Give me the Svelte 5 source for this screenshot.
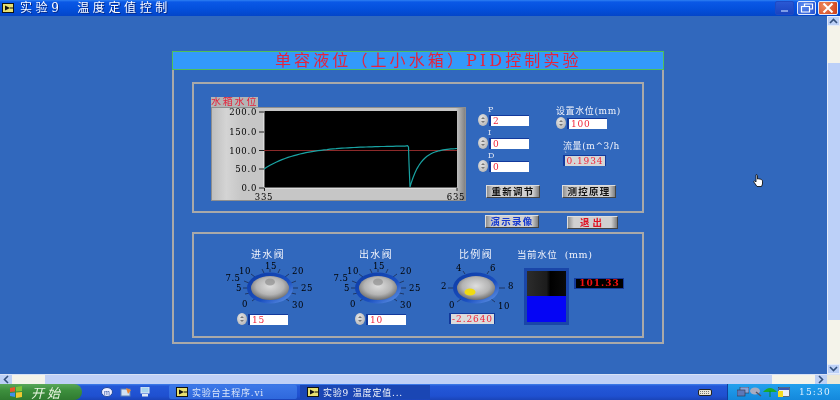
<script>
  const f = (v) => v.toFixed(1);
  let pts = [];
  for (let x = 53; x <= 196; x += 3) pts.push(`${x},${f(38.7 + 23.3 * Math.exp(-(x - 53) / 35))}`);
  pts.push('196.5,38.7', '197.5,40', '198,56', '199,80');
  for (let x = 200; x <= 246; x += 2) pts.push(`${x},${f(41 + 39 * Math.exp(-(x - 199) / 11))}`);
  const curve = pts.join(' ');
  const yAxis = [['200.0', 5], ['150.0', 25], ['100.0', 43.5], ['50.0', 62], ['0.0', 81]];

  const valveLabels = [['0', -25, 16], ['5', -31, 0], ['7.5', -37, -10], ['10', -25, -17], ['15', 1, -22], ['20', 28, -17], ['25', 37, 0], ['30', 28, 17]];
  const valveTicks = [[-14, 10, -18, 13], [-20, 5, -25, 6], [-21, 0, -27, 0], [-21, -5, -26, -7], [-15, -11, -19, -14], [-6, -15, -8, -19], [0, -16, 0, -19], [8, -15, 10, -19], [15, -11, 19, -14], [21, -5, 26, -7], [22, 0, 28, 0], [21, 5, 26, 6], [15, 10, 19, 13]];

  const dials = [
    { title: '进水阀', cls: 'd1', value: '15', spot: 'gray', labels: valveLabels, ticks: valveTicks },
    { title: '出水阀', cls: 'd2', value: '10', spot: 'gray', labels: valveLabels, ticks: valveTicks },
    { title: '比例阀', cls: 'd3', value: null, spot: 'yellow',
      labels: [['0', -24, 17], ['2', -32, -2], ['4', -17, -20], ['6', 17, -20], ['8', 35, -2], ['10', 28, 18]],
      ticks: [[-15, 11, -19, 14], [-22, 0, -28, 0], [-11, -14, -13, -17], [11, -14, 13, -17], [22, 0, 29, 0], [15, 11, 19, 14]] }
  ];
</script>

{#snippet numeric(value)}
  <div class="ctl">
    <div class="spin"><i class="up"></i><i class="dn"></i></div>
    <div class="num">{value}</div>
  </div>
{/snippet}

{#snippet viIcon()}
  <svg class="vi" viewBox="0 0 12 10" width="12" height="10">
    <rect width="12" height="10" fill="#111" />
    <rect x="1" y="1" width="10" height="8" fill="#e8e070" />
    <path d="M3 2.5 L8 5 L3 7.5Z" fill="#111" />
    <path d="M8 5h3" stroke="#111" />
  </svg>
{/snippet}

<div class="screen">
  <header class="titlebar">
    {@render viIcon()}
    <span class="wintitle">实验9&nbsp; 温度定值控制</span>
    <span class="winbtns">
      <span class="wb min"><i></i></span>
      <span class="wb res">
        <svg viewBox="0 0 14 10" width="14" height="10"><path d="M4.5 3V1h8v5h-2.5M1.5 3.5h8v5.5h-8z" fill="none" stroke="#fff" stroke-width="1.2" /></svg>
      </span>
      <span class="wb close">
        <svg viewBox="0 0 12 10" width="12" height="10"><path d="M1.5 .5L10.5 9.5M10.5 .5L1.5 9.5" stroke="#fff" stroke-width="2" /></svg>
      </span>
    </span>
  </header>

  <div class="mid">
    <main class="canvas">
      <section class="panel">
        <h1 class="head">单容液位（上小水箱）PID控制实验</h1>
        <div class="frame">
          <div class="box top">
            <div class="chartcol">
              <div class="chartlabel">水箱水位</div>
              <svg class="chart" width="255" height="94" viewBox="0 0 255 94">
                <defs>
                  <linearGradient id="cg" x1="0" x2="1" y1="0" y2="0">
                    <stop offset="0" stop-color="#bdbdbd" />
                    <stop offset=".06" stop-color="#d4d4d4" />
                    <stop offset=".12" stop-color="#c6c6c6" />
                    <stop offset=".96" stop-color="#c6c6c6" />
                    <stop offset="1" stop-color="#7c7c7c" />
                  </linearGradient>
                </defs>
                <rect width="255" height="94" fill="url(#cg)" />
                <rect x=".5" y=".5" width="254" height="93" fill="none" stroke="#8e8e8e" />
                <rect x="53" y="4" width="193" height="77" fill="#000" />
                <path d="M53 4V81H246" fill="none" stroke="#fff" stroke-width=".8" />
                {#each yAxis as [label, y]}
                  <text x="46" y={y + 3} text-anchor="end" class="axis">{label}</text>
                  <line x1="48" x2="53" y1={y} y2={y} stroke="#222" />
                {/each}
                <line x1="53.5" x2="53.5" y1="81" y2="84" stroke="#222" />
                <line x1="246" x2="246" y1="81" y2="84" stroke="#222" />
                <text x="53" y="92.5" text-anchor="middle" class="axis">335</text>
                <text x="245" y="92.5" text-anchor="middle" class="axis">635</text>
                <line x1="53" x2="246" y1="43.5" y2="43.5" stroke="#8c2a2a" />
                <polyline points={curve} fill="none" stroke="#19a3a3" stroke-width="1.2" />
              </svg>
            </div>
            <div class="pidcol">
              <div class="pid"><span class="lbl dark">P</span>{@render numeric('2')}</div>
              <div class="pid"><span class="lbl dark">I</span>{@render numeric('0')}</div>
              <div class="pid"><span class="lbl dark">D</span>{@render numeric('0')}</div>
              <button class="btn b1">重新调节</button>
            </div>
            <div class="setcol">
              <div class="lbl wide">设置水位(mm)</div>
              {@render numeric('100')}
              <div class="lbl flow">流量(m^3/h</div>
              <div class="tickmark">`</div>
              <div class="ind flowval">0.1934</div>
              <button class="btn b2">测控原理</button>
            </div>
          </div>

          <div class="midrow">
            <button class="btn demo">演示录像</button>
            <button class="btn exit">退出</button>
          </div>

          <div class="box bottom">
            {#each dials as d, i}
              <div class="dial {d.cls}">
                <div class="lbl dtitle">{d.title}</div>
                <svg width="98" height="51" viewBox="-49 -28 98 51">
                  <defs>
                    <radialGradient id="knob{i}" cx=".5" cy=".42" r=".6">
                      <stop offset="0" stop-color="#dedede" />
                      <stop offset=".6" stop-color="#b4b4b4" />
                      <stop offset="1" stop-color="#686868" />
                    </radialGradient>
                    <linearGradient id="ring{i}" x1="0" x2="1" y1="0" y2="1">
                      <stop offset="0" stop-color="#0c3aa4" />
                      <stop offset=".6" stop-color="#1a4fc0" />
                      <stop offset="1" stop-color="#6ea0ec" />
                    </linearGradient>
                  </defs>
                  {#each d.ticks as t}
                    <line x1={t[0]} y1={t[1]} x2={t[2]} y2={t[3]} stroke="#1b2a4e" stroke-width=".8" />
                  {/each}
                  {#each d.labels as l}
                    <text x={l[1]} y={l[2] + 3} text-anchor="middle" class="dnum">{l[0]}</text>
                  {/each}
                  <ellipse rx="23" ry="15.5" fill="url(#ring{i})" />
                  <ellipse rx="19" ry="12" fill="url(#knob{i})" />
                  {#if d.spot === 'yellow'}
                    <ellipse cx="-6" cy="4" rx="5.5" ry="3.6" fill="#f0dc10" />
                  {:else}
                    <ellipse cx="0" cy="-6" rx="5" ry="3.5" fill="#8e8e8e" opacity=".7" />
                  {/if}
                </svg>
                {#if d.value}
                  <div class="dctl">{@render numeric(d.value)}</div>
                {:else}
                  <div class="ind ratio">-2.2640</div>
                {/if}
              </div>
            {/each}
            <div class="level">
              <div class="lbl ltitle">当前水位&nbsp; (mm)</div>
              <div class="levelrow">
                <div class="tank"><div class="empty"></div><div class="water"></div></div>
                <div class="readout">101.33</div>
              </div>
            </div>
          </div>
        </div>
      </section>
    </main>
    <aside class="vscroll">
      <span class="arrow"><svg viewBox="0 0 9 6" width="9" height="6"><path d="M1 5L4.5 1.5L8 5" fill="none" stroke="#33507c" stroke-width="1.6" /></svg></span>
      <span class="vtrack"></span>
      <span class="vthumb"></span>
      <span class="vtrack grow"></span>
      <span class="arrow"><svg viewBox="0 0 9 6" width="9" height="6"><path d="M1 1L4.5 4.5L8 1" fill="none" stroke="#33507c" stroke-width="1.6" /></svg></span>
    </aside>
  </div>

  <div class="hscroll">
    <span class="harrow"><svg viewBox="0 0 6 9" width="6" height="9"><path d="M5 1L1.5 4.5L5 8" fill="none" stroke="#33507c" stroke-width="1.6" /></svg></span>
    <span class="htrack left"></span>
    <span class="hthumb"></span>
    <span class="htrack right"></span>
    <span class="harrow"><svg viewBox="0 0 6 9" width="6" height="9"><path d="M1 1L4.5 4.5L1 8" fill="none" stroke="#33507c" stroke-width="1.6" /></svg></span>
    <span class="corner"></span>
  </div>

  <footer class="taskbar">
    <div class="start">
      <svg viewBox="0 0 14 12" width="14" height="12">
        <path d="M1 2l5-1v4.5l-5 .5z" fill="#e8552a" />
        <path d="M7 1l6-1v5l-6 .5z" fill="#7fc43a" />
        <path d="M1 7l5-.5V11l-5-1z" fill="#3f8fe8" />
        <path d="M7 6.5l6-.5v5l-6 1z" fill="#f0c830" />
      </svg>
      <span>开始</span>
    </div>
    <div class="quick">
      <svg viewBox="0 0 12 10" width="12" height="10"><ellipse cx="6" cy="5" rx="5.5" ry="4.5" fill="#eef" stroke="#234a9c" /><text x="6" y="7.5" text-anchor="middle" font-size="7" fill="#234a9c" font-family="Liberation Sans">m</text></svg>
      <svg viewBox="0 0 12 10" width="12" height="10"><rect x="1" y="2" width="9" height="7" fill="#cfe0f4" stroke="#5a7fb8" /><path d="M6 1l5 2-3 4z" fill="#e8863a" /></svg>
      <svg viewBox="0 0 12 10" width="12" height="10"><rect x="2" y="0" width="8" height="6" fill="#a8d4f0" stroke="#dfe8f4" /><rect x="3" y="7" width="6" height="2.5" fill="#dfe8f4" /></svg>
    </div>
    <div class="task active">{@render viIcon()}<span>实验台主程序.vi</span></div>
    <div class="task pressed">{@render viIcon()}<span>实验9 温度定值...</span></div>
    <div class="kbd">
      <svg viewBox="0 0 14 7" width="14" height="7"><rect x=".5" y=".5" width="13" height="6" rx="1.5" fill="#e8e4d8" stroke="#222" /><path d="M2 2.5h10M2 4.5h10" stroke="#777" stroke-dasharray="1 1" /></svg>
    </div>
    <div class="tray">
      <svg viewBox="0 0 12 10" width="12" height="10"><rect x="3" y="0" width="9" height="6" fill="#8aa4d8" stroke="#334" stroke-width=".6" /><rect x="0" y="3" width="8" height="6" fill="#5c78b8" stroke="#334" stroke-width=".6" /></svg>
      <svg viewBox="0 0 12 10" width="12" height="10"><ellipse cx="5" cy="4" rx="5" ry="3.5" fill="#a8acc0" /><path d="M6 5l5 4" stroke="#556" stroke-width="1.5" /></svg>
      <svg viewBox="0 0 14 10" width="14" height="10"><path d="M0 5Q7-3 14 5z" fill="#1caa2a" /><path d="M7 4v6" stroke="#083" /></svg>
      <svg viewBox="0 0 12 10" width="12" height="10"><rect x=".5" y=".5" width="11" height="9" fill="#e8eef8" stroke="#334" stroke-width=".6" /><rect x="1" y="1" width="10" height="2" fill="#3a58b0" /><rect y="4" width="5" height="6" fill="#f4dc20" /></svg>
      <span class="clock">15:30</span>
    </div>
  </footer>

  <svg class="cursor" viewBox="0 0 11 13" width="11" height="13">
    <path d="M3 .8c1-.4 1.5.2 1.5 1V5l1-.2 1 .2 1 .2 1 .4c.8.3 1 .8 1 1.5V10l-1 2.5H4L1 8.2c-.6-1 .3-1.8 1.2-1L3 8V1z" fill="#fff" stroke="#000" stroke-width=".8" />
  </svg>
</div>

<style>
  :global(body) { margin: 0; background: #3168bd; }
  .screen {
    --txt: "DejaVu Serif", "Noto Sans CJK SC", serif;
    position: relative;
    width: 840px;
    height: 400px;
    overflow: hidden;
    display: flex;
    flex-direction: column;
    font-family: var(--txt);
    background: #3168bd;
    filter: blur(.3px);
  }
  i { display: block; }

  .titlebar {
    height: 16px;
    flex: none;
    display: flex;
    align-items: center;
    padding-left: 2px;
    box-sizing: border-box;
    background: linear-gradient(#2f80f2 0, #0a58e6 2px, #0450dc 9px, #0345c8 16px);
  }
  .wintitle {
    margin-left: 6px;
    color: #fff;
    font-size: 12px;
    letter-spacing: 3.6px;
    line-height: 14px;
    white-space: nowrap;
    text-shadow: 1px 1px 0 #0a2a80;
  }
  .winbtns { margin-left: auto; display: flex; gap: 2px; padding-right: 2px; }
  .wb {
    width: 19px;
    height: 14px;
    box-sizing: border-box;
    display: flex;
    align-items: center;
    justify-content: center;
    border: 1px solid #dfe8fa;
    border-radius: 2px;
    background: radial-gradient(circle at 30% 30%, #5c8cf0, #2450d0);
  }
  .wb.min {
    border-color: #1f4ac4;
    background: linear-gradient(#2a58d4, #1a44c0);
    padding: 6px 0 0 0;
    margin-right: 1px;
  }
  .wb.min i { width: 7px; height: 2px; background: #7d9ce8; }
  .wb.close { background: radial-gradient(circle at 30% 30%, #ee8a60, #cf3a12); width: 20px; }

  .mid { flex: none; height: 358px; display: flex; }
  .canvas { flex: 1; padding: 35px 0 0 172px; box-sizing: border-box; min-width: 0; }
  .panel { width: 492px; }
  .head {
    margin: 0;
    height: 19px;
    box-sizing: border-box;
    border: 1px solid #4fbf5a;
    background: #3399fb;
    color: #e5233c;
    font-size: 16px;
    font-weight: 400;
    letter-spacing: 3.1px;
    line-height: 17px;
    padding-left: 102px;
    white-space: nowrap;
  }
  .frame {
    height: 274px;
    box-sizing: border-box;
    border: solid #a9a9a9;
    border-width: 0 2px 2px;
    padding: 12px 0 0 18px;
  }
  .box {
    width: 452px;
    box-sizing: border-box;
    border: 2px solid #a9a9a9;
    display: flex;
    align-items: flex-start;
  }
  .box.top { height: 131px; }
  .box.bottom { height: 106px; }

  .chartcol { margin: 13px 0 0 17px; width: 255px; flex: none; }
  .chartlabel {
    width: 47px;
    height: 10px;
    background: #b4b4b4;
    color: #e5233c;
    font-size: 10px;
    line-height: 10px;
    letter-spacing: 1.8px;
    white-space: nowrap;
    overflow: hidden;
  }
  .chart { display: block; }
  .axis { font-size: 8.5px; letter-spacing: .7px; fill: #000; font-family: var(--txt); }

  .pidcol { margin: 21px 0 0 12px; width: 62px; flex: none; }
  .pid { height: 23px; }
  .lbl { display: block; color: #f0f2fa; font-size: 9px; line-height: 9px; white-space: nowrap; }
  .lbl.dark { margin-left: 10px; color: #e4e8f4; font-size: 8px; }

  .ctl { display: flex; align-items: center; height: 12px; }
  .spin {
    width: 10px;
    height: 12px;
    flex: none;
    border-radius: 50%;
    background: radial-gradient(ellipse at 40% 35%, #e6e6e6, #b8b8b8 75%, #8a8a8a);
    display: flex;
    flex-direction: column;
    align-items: center;
    justify-content: center;
    gap: 2px;
  }
  .spin i { width: 0; height: 0; border: 2px solid transparent; border-top: 0; border-bottom: 2px solid #777; }
  .spin i.dn { border-bottom: 0; border-top: 2px solid #777; }
  .num {
    margin-left: 1px;
    width: 40px;
    height: 11px;
    box-sizing: border-box;
    background: #fff;
    border: solid #12399c;
    border-width: 1px 0 0 2px;
    color: #f0243a;
    font-size: 9px;
    line-height: 10px;
    padding-left: 2px;
    letter-spacing: .8px;
  }
  .ind {
    box-sizing: border-box;
    background: #d6d6d6;
    border: solid #12399c;
    border-width: 1px 1px 0 2px;
    color: #f0243a;
    font-size: 9px;
    line-height: 10px;
    letter-spacing: .9px;
    white-space: nowrap;
    height: 11px;
    text-align: center;
  }

  .setcol { margin: 23px 0 0 16px; width: 80px; flex: none; }
  .lbl.wide { height: 10px; letter-spacing: .6px; }
  .lbl.flow { margin: 13px 0 0 7px; height: 10px; letter-spacing: .6px; }
  .tickmark { height: 3px; color: #dde; font-size: 8px; line-height: 8px; margin-left: 8px; }
  .flowval { margin-left: 7px; width: 43px; }

  .btn {
    display: block;
    padding: 0;
    height: 13px;
    box-sizing: border-box;
    font-family: var(--txt);
    font-size: 9.5px;
    line-height: 11px;
    font-weight: 700;
    letter-spacing: 1.2px;
    white-space: nowrap;
    color: #111;
    background: linear-gradient(90deg, #8e8e8e, #d0d0d0 12%, #d0d0d0 88%, #7e7e7e);
    border: 1px solid;
    border-color: #ddd #444 #444 #ddd;
  }
  .b1 { margin: 11px 0 0 8px; width: 54px; }
  .b2 { margin: 19px 0 0 6px; width: 54px; }
  .midrow { height: 19px; display: flex; align-items: flex-start; padding-left: 293px; }
  .demo { margin-top: 2px; width: 54px; color: #1438d0; }
  .exit { margin: 3px 0 0 28px; width: 51px; color: #e01020; letter-spacing: 3px; }

  .dial { flex: none; width: 98px; margin-top: 16px; }
  .dial svg { display: block; overflow: visible; }
  .d1 { margin-left: 27px; }
  .d2 { margin-left: 10px; }
  .d3 { width: 88px; }
  .d1 .dctl { margin: 2px 0 0 16px; }
  .d2 .dctl { margin: 2px 0 0 26px; }
  .dtitle { height: 10px; font-size: 10px; line-height: 10px; text-align: center; letter-spacing: 1.4px; color: #eef1fa; padding-right: 4px; box-sizing: border-box; }
  .d3 .dtitle { padding-right: 0; width: 98px; }
  .dnum { font-size: 8.5px; fill: #000; letter-spacing: .5px; font-family: var(--txt); }
  .ratio { margin: 2px 0 0 22px; width: 46px; background: #dcdcdc; }

  .level { margin: 16px 0 0 2px; flex: none; width: 110px; }
  .ltitle { height: 10px; font-size: 9.5px; line-height: 10px; letter-spacing: .6px; }
  .levelrow { display: flex; align-items: flex-start; margin: 8px 0 0 7px; }
  .tank {
    width: 45px;
    height: 57px;
    box-sizing: border-box;
    border: 3px solid #1a46a8;
    display: flex;
    flex-direction: column;
    flex: none;
  }
  .empty { height: 25px; background: linear-gradient(90deg, #2c2c2c, #1c1c1c 50%, #000 60%, #0a0a0a); }
  .water { flex: 1; background: #0505f5; }
  .readout {
    margin: 10px 0 0 5px;
    width: 50px;
    height: 11px;
    box-sizing: border-box;
    background: #000;
    border: 2px solid #143a9a;
    border-width: 1px 1px 1px 2px;
    color: #f01010;
    font-size: 9px;
    line-height: 9px;
    letter-spacing: 1px;
    text-align: center;
    font-weight: 700;
    white-space: nowrap;
    overflow: hidden;
  }

  .vscroll { width: 13px; flex: none; display: flex; flex-direction: column; background: #f4f3ea; }
  .arrow { height: 8px; flex: none; background: #bcd0f6; display: flex; align-items: center; justify-content: center; border: 1px solid #e4ecfa; box-sizing: content-box; width: 11px; }
  .vtrack { height: 37px; flex: none; }
  .vtrack.grow { flex: 1; height: auto; }
  .vthumb { height: 257px; flex: none; background: #bcd0f8; border-left: 1px solid #e8eefc; }

  .hscroll { height: 10px; flex: none; display: flex; background: #f4f3ea; border-top: 1px solid #d8e2f6; box-sizing: border-box; }
  .harrow { width: 12px; flex: none; background: #bcd0f6; display: flex; align-items: center; justify-content: center; }
  .htrack.left { width: 33px; flex: none; }
  .hthumb { width: 727px; flex: none; background: #bfd0f6; }
  .htrack.right { width: 43px; flex: none; }
  .corner { flex: 1; background: #ece9d8; }

  .taskbar {
    height: 16px;
    flex: none;
    display: flex;
    align-items: center;
    background: linear-gradient(#4080ea 0, #2458d8 2px, #1f50d0 12px, #1a44b8 16px);
    color: #fff;
    font-size: 9px;
  }
  .start {
    width: 82px;
    height: 16px;
    flex: none;
    box-sizing: border-box;
    display: flex;
    align-items: center;
    padding-left: 9px;
    gap: 8px;
    background: linear-gradient(#5aa85a, #3d8f3d 40%, #2f7a30);
    border-radius: 0 8px 8px 0;
    font-size: 13px;
    font-style: italic;
    letter-spacing: 3px;
    color: #e8f4e0;
    font-family: "Noto Sans CJK SC", sans-serif;
  }
  .quick { margin-left: 19px; width: 68px; flex: none; display: flex; gap: 7px; }
  .task {
    height: 14px;
    width: 128px;
    flex: none;
    box-sizing: border-box;
    display: flex;
    align-items: center;
    gap: 4px;
    padding-left: 7px;
    white-space: nowrap;
    font-size: 9px;
    letter-spacing: .8px;
  }
  .task.active { background: linear-gradient(#3c78e8, #2f68dc); color: #dbe6fa; border-radius: 2px; }
  .task.pressed { margin-left: 3px; width: 130px; background: #1a46b4; color: #f4f6fc; }
  .kbd { margin-left: auto; width: 29px; flex: none; display: flex; }
  .tray {
    width: 113px;
    height: 16px;
    flex: none;
    box-sizing: border-box;
    display: flex;
    align-items: center;
    gap: 1px;
    padding-left: 9px;
    background: linear-gradient(#22a0ee, #1488dc);
    border-left: 1px solid #0f3e9c;
  }
  .clock { margin-left: 8px; color: #dff0ff; font-size: 9px; letter-spacing: 1.2px; }
  .cursor { position: absolute; left: 753px; top: 174px; }
</style>
